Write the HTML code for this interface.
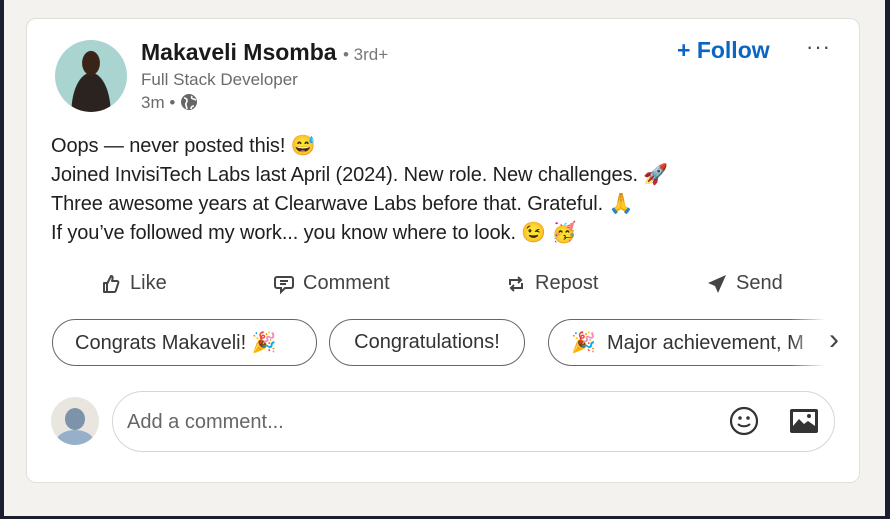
<!DOCTYPE html><html><head><style>
*{margin:0;padding:0;box-sizing:border-box}
body{width:890px;height:519px;background:#1b1e2e;position:relative;overflow:hidden;font-family:"Liberation Sans","Noto Sans CJK JP",sans-serif;color:#1f1f1f}
.bg{position:absolute;left:4px;top:0;width:881px;height:516px;background:#f3f2ef}
.card{position:absolute;left:26px;top:18px;width:834px;height:465px;background:#fff;border:1px solid #e0dfdc;border-radius:10px}
.a{position:absolute;white-space:nowrap}
.av{left:55px;top:40px;width:72px;height:72px;border-radius:50%;background:radial-gradient(ellipse at 50% 32%,#3a2418 0 17%,transparent 18%),radial-gradient(ellipse at 50% 100%,#2a2320 0 38%,transparent 39%),#a9d4cf;overflow:hidden}
.name{left:141px;top:39px;font-size:23px;font-weight:bold;color:#1a1a1a}
.name span{font-weight:normal;font-size:17px;color:#777}
.sub{left:141px;top:70px;font-size:17px;color:#6b6b6b}
.time{left:141px;top:93px;font-size:17px;color:#6b6b6b}
.follow{left:677px;top:37px;font-size:23px;color:#0a66c2;font-weight:bold}
.dots{left:806px;top:34px;font-size:22px;color:#444;letter-spacing:1px}
.body{left:51px;top:132px;font-size:20px;line-height:29px;color:#1f1f1f;letter-spacing:-0.1px}
.act{top:272px;font-size:20px;color:#444;display:flex;align-items:center;gap:8px}
.chip{top:319px;height:47px;border:1.5px solid #666;border-radius:24px;font-size:20px;color:#333;display:flex;align-items:center;padding-left:22px;white-space:nowrap;overflow:hidden}
.cav{left:51px;top:397px;width:48px;height:48px;border-radius:50%;background:#e9e5df;overflow:hidden}
.box{left:112px;top:391px;width:723px;height:61px;border:1px solid #d6d6d6;border-radius:31px;font-size:20px;color:#666;padding:19px 0 0 14px}
</style></head><body>
<div class="bg"></div>
<div class="card"></div>
<div class="a av"></div>
<div class="a name">Makaveli Msomba <span>• 3rd+</span></div>
<div class="a sub">Full Stack Developer</div>
<div class="a time">3m • <svg width="18" height="18" viewBox="0 0 18 18" style="vertical-align:-3px"><circle cx="9" cy="9" r="8" fill="#666"/><path d="M4 5c2 0 3 1 3 3s-2 2-1 4l1 4M12 3c-1 2 0 3 2 3l2 1M11 16c0-2 1-3 3-3" stroke="#fff" stroke-width="1.6" fill="none"/></svg></div>
<div class="a follow">+ Follow</div>
<div class="a dots">···</div>
<div class="a body">Oops — never posted this! 😅<br>Joined InvisiTech Labs last April (2024). New role. New challenges. 🚀<br>Three awesome years at Clearwave Labs before that. Grateful. 🙏<br>If you’ve followed my work... you know where to look. 😉 🥳</div>
<div class="a act" style="left:100px"><svg width="22" height="22" viewBox="0 0 22 22"><path d="M4 10h3v9H4zM7 11l4-8c2 0 2 2 1 5h5c1 0 2 1 1 3l-2 6c0 1-1 2-2 2H7" stroke="#444" stroke-width="2" fill="none" stroke-linejoin="round"/></svg>Like</div>
<div class="a act" style="left:273px"><svg width="22" height="22" viewBox="0 0 22 22"><path d="M4 4h14a2 2 0 012 2v7a2 2 0 01-2 2h-6l-4 4v-4H4a2 2 0 01-2-2V6a2 2 0 012-2zM7 8h8M7 11h6" stroke="#444" stroke-width="2" fill="none"/></svg>Comment</div>
<div class="a act" style="left:505px"><svg width="22" height="22" viewBox="0 0 22 22"><path d="M5 12V7h11M13 4l3 3-3 3M17 10v5H6M9 18l-3-3 3-3" stroke="#444" stroke-width="2" fill="none"/></svg>Repost</div>
<div class="a act" style="left:706px"><svg width="22" height="22" viewBox="0 0 22 22"><path d="M20 2L2 10l7 3 3 7z" fill="#444"/></svg>Send</div>
<div class="a chip" style="left:52px;width:265px">Congrats Makaveli! 🎉</div>
<div class="a chip" style="left:329px;width:196px;justify-content:center;padding-left:0">Congratulations!</div>
<div class="a chip" style="left:548px;width:290px;border-right:none;border-radius:24px 0 0 24px">🎉&nbsp; Major achievement, M</div>
<div class="a" style="left:790px;top:319px;width:50px;height:47px;background:linear-gradient(90deg,rgba(255,255,255,0),#fff 70%)"></div>
<div class="a" style="left:829px;top:323px;font-size:30px;color:#444">›</div>
<div class="a cav"><div style="position:absolute;left:14px;top:11px;width:20px;height:22px;border-radius:50%;background:#7d93aa"></div><div style="position:absolute;left:5px;top:33px;width:38px;height:24px;border-radius:50%;background:#97b0c9"></div></div>
<div class="a box">Add a comment...</div>
<svg class="a" style="left:728px;top:405px" width="32" height="32" viewBox="0 0 32 32"><circle cx="16" cy="16" r="13" stroke="#333" stroke-width="2.2" fill="none"/><circle cx="12" cy="13" r="1.8" fill="#333"/><circle cx="20" cy="13" r="1.8" fill="#333"/><path d="M10 19c3 3 9 3 12 0" stroke="#333" stroke-width="2" fill="none"/></svg>
<svg class="a" style="left:789px;top:408px" width="30" height="26" viewBox="0 0 30 26"><rect x="1" y="1" width="28" height="24" rx="2" fill="#333"/><rect x="4" y="4" width="22" height="14" fill="#fff"/><path d="M4 18l6-7 5 5 4-3 7 5z" fill="#333"/><circle cx="20" cy="8" r="2" fill="#333"/></svg>
</body></html>
